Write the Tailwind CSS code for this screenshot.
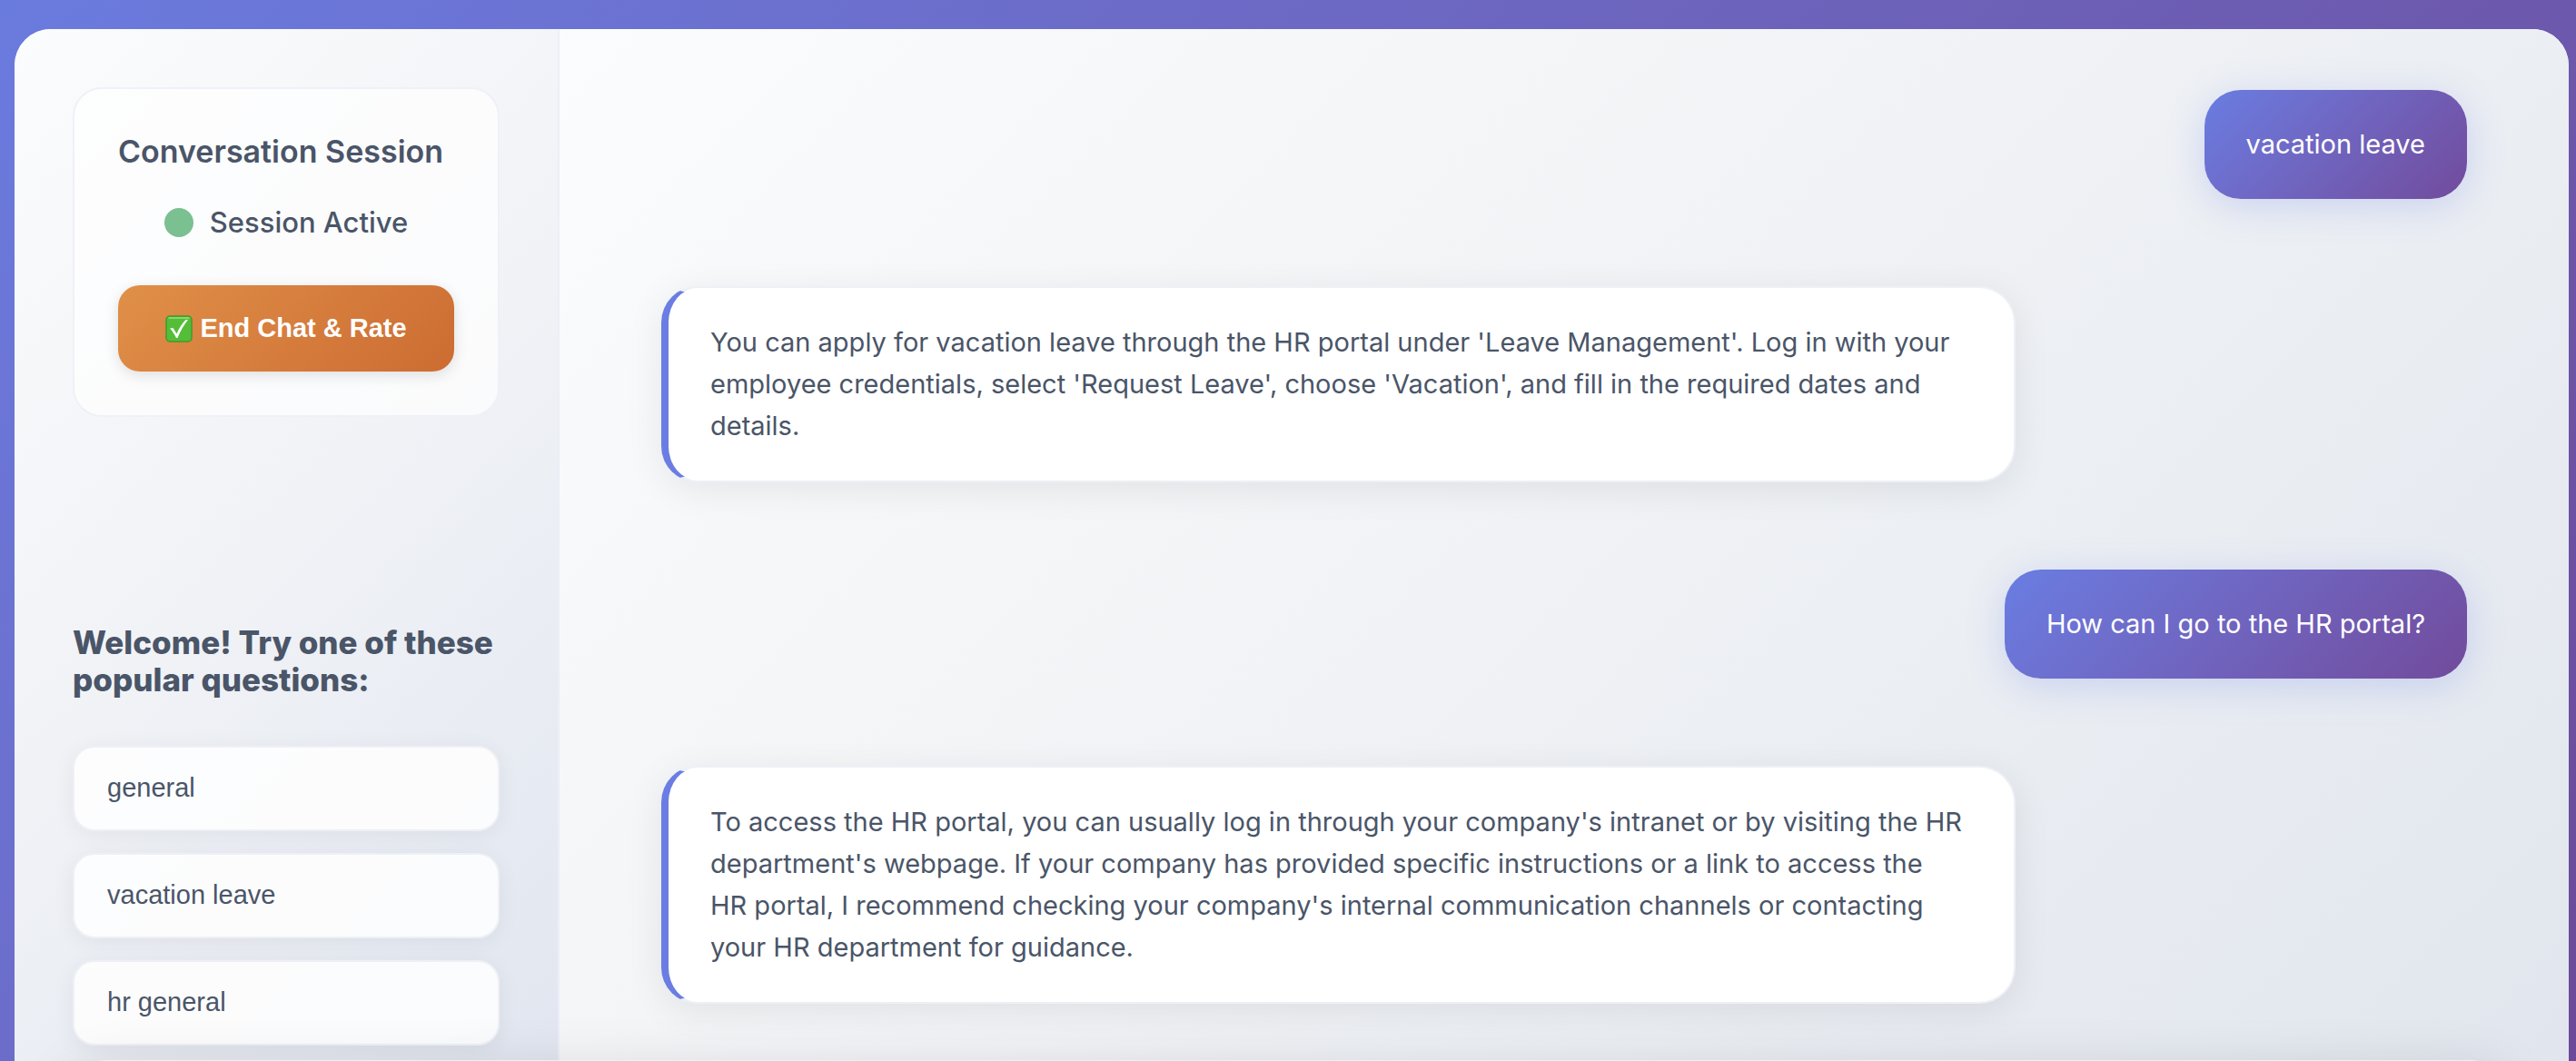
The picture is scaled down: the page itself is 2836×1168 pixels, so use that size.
<!DOCTYPE html>
<html lang="en">
<head>
<meta charset="utf-8">
<meta name="viewport" content="width=device-width, initial-scale=1">
<title>HR Assistant</title>
<script src="https://cdn.jsdelivr.net/npm/@tailwindcss/browser@4"></script>
</head>
<body class="h-screen overflow-hidden bg-linear-135 from-[#6a7bde] to-[#6b4a99] pt-8 pl-4 pr-2 font-['Inter',sans-serif] text-[#4a5568]">
<div class="flex h-full overflow-hidden rounded-t-[40px] bg-white">
  <aside class="flex w-[600px] shrink-0 flex-col border-r-2 border-[#eceef7] bg-linear-135 from-[#fbfcfd] via-[#f0f2f6] to-[#e1e6f0] p-16">
    <section class="flex flex-col rounded-[32px] border-2 border-[#eef1f7] bg-white/70 p-12">
      <h2 class="text-[34px] leading-[42px] font-semibold whitespace-nowrap">Conversation Session</h2>
      <p class="mt-[38px] flex items-center justify-center gap-[18px] text-[31px] leading-[38px] font-medium"><span class="size-8 rounded-full bg-[#7bc090]"></span>Session Active</p>
      <button type="button" class="mt-[50px] flex h-[95px] items-center justify-center gap-2 rounded-3xl bg-linear-135 from-[#e09049] to-[#cc6c32] font-['Liberation_Sans',sans-serif] text-[29px] font-bold text-white shadow-[0_4px_16px_rgba(0,0,0,0.12)]">
        <svg class="size-[30px]" viewBox="0 0 30 30" aria-hidden="true"><rect x="1" y="1" width="28" height="28" rx="4" fill="#55bd38" stroke="#3f9a2b" stroke-width="1.5"/><path d="M4 3h22" stroke="#9be080" stroke-width="1.5" stroke-linecap="round"/><path d="M5 14.500L8.500 14L12.500 20.500C15 14.500 18.500 9 22.500 5H25C20.500 10.500 16.500 17.500 13.500 25H12C10 21 8 17.500 5 14.500z" fill="#fff"/></svg>
        End Chat &amp; Rate
      </button>
    </section>
    <section class="mt-[228px] flex flex-col">
      <h2 class="text-[35px] leading-[41px] font-extrabold">Welcome! Try one of these popular questions:</h2>
      <div class="mt-[52px] flex flex-col gap-6">
        <button type="button" class="h-[94px] shrink-0 rounded-3xl border-2 border-[#eef0f6] bg-white/85 px-9 text-left font-['Liberation_Sans',sans-serif] text-[29px] shadow-[0_4px_24px_rgba(0,0,0,0.06)]">general</button>
        <button type="button" class="h-[94px] shrink-0 rounded-3xl border-2 border-[#eef0f6] bg-white/85 px-9 text-left font-['Liberation_Sans',sans-serif] text-[29px] shadow-[0_4px_24px_rgba(0,0,0,0.06)]">vacation leave</button>
        <button type="button" class="h-[94px] shrink-0 rounded-3xl border-2 border-[#eef0f6] bg-white/85 px-9 text-left font-['Liberation_Sans',sans-serif] text-[29px] shadow-[0_4px_24px_rgba(0,0,0,0.06)]">hr general</button>
      </div>
    </section>
  </aside>
  <main class="flex min-w-0 grow flex-col gap-24 bg-linear-135 from-[#fbfcfd] via-[#f0f2f5] to-[#e1e6ee] px-28 pt-[67px] text-[29px] leading-[46px]">
    <p class="self-end rounded-[40px] bg-linear-135 from-[#697de2] to-[#714b9c] px-[46px] py-[37px] text-white shadow-[0_8px_40px_rgba(102,126,234,0.25)]">vacation leave</p>
    <p class="w-3/4 rounded-[40px] border-2 border-l-8 border-[#edf0f5] border-l-[#6b7de3] bg-white px-[46px] py-[37px] shadow-[0_8px_40px_rgba(0,0,0,0.08)]">You can apply for vacation leave through the HR portal under 'Leave Management'. Log in with your employee credentials, select 'Request Leave', choose 'Vacation', and fill in the required dates and details.</p>
    <p class="self-end rounded-[40px] bg-linear-135 from-[#697de2] to-[#714b9c] px-[46px] py-[37px] text-white shadow-[0_8px_40px_rgba(102,126,234,0.25)]">How can I go to the HR portal?</p>
    <p class="w-3/4 rounded-[40px] border-2 border-l-8 border-[#edf0f5] border-l-[#6b7de3] bg-white px-[46px] py-[37px] shadow-[0_8px_40px_rgba(0,0,0,0.08)]">To access the HR portal, you can usually log in through your company's intranet or by visiting the HR department's webpage. If your company has provided specific instructions or a link to access the HR&nbsp;portal, I recommend checking your company's internal communication channels or contacting your HR department for guidance.</p>
  </main>
</div>
<!-- top edge of the docked message bar -->
<div class="fixed inset-x-[76px] top-[calc(100%-1px)] h-40 rounded-[40px] bg-[#eef0f5] shadow-[0_16px_64px_rgba(0,0,0,0.15)]" aria-hidden="true"></div>
</body>
</html>
